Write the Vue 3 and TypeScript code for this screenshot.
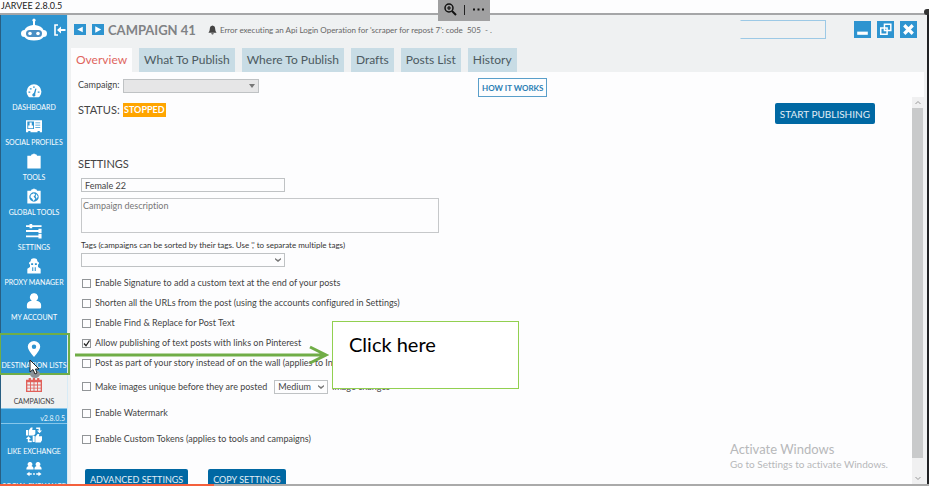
<script setup lang="ts">
import { ref } from 'vue'

interface NavItem { label: string; icon: string }
interface Option { label: string; checked: boolean; kind: 'tight' | 'select' | 'loose' }

const mainNav: NavItem[] = [
  { label: 'DASHBOARD', icon: 'gauge' },
  { label: 'SOCIAL PROFILES', icon: 'card' },
  { label: 'TOOLS', icon: 'clip' },
  { label: 'GLOBAL TOOLS', icon: 'globe' },
  { label: 'SETTINGS', icon: 'sliders' },
  { label: 'PROXY MANAGER', icon: 'spy' },
  { label: 'MY ACCOUNT', icon: 'user' },
]
const extraNav: NavItem[] = [
  { label: 'LIKE EXCHANGE', icon: 'likes' },
  { label: 'SOCIAL EXCHANGE', icon: 'people' },
]
const icons: Record<string, string> = {
  gauge: 'M2.500 15A8.300 8.300 0 1 1 15.500 15Q15 16 14 16H4Q3 16 2.500 15ZM7.500 12.500a1.700 1.700 0 1 0 2.800.200L11.800 6.500L10.500 6.200L9 11ZM2.800 9.500h2v1.600H2.800ZM4.300 5.800h2v1.600h-2ZM8 3.800h1.800v1.600H8ZM13.200 9.500h2v1.600h-2Z',
  card: 'M0 2.500H18V16H15.500V14.500H13V16H5V14.500H2.500V16H0ZM1.500 4V12.500H9V4.000ZM4 5h2.500v3.500H8v3H2.500V8.500H4ZM10.500 5V6H16V5ZM10.500 7.500V8.500H16V7.500ZM10.500 10V11H16V10Z',
  clip: 'M1.500 3H5.500L6.500 1.500H8L9 .2L10 1.500H11.500L12.500 3H16.500V17.500H1.500Z',
  globe: 'M1.500 3H5.500L6.500 1.500H8L9 .2L10 1.500H11.500L12.500 3H16.500V17.500H1.500ZM9 4.800A5.300 5.300 0 1 0 9 15.400A5.300 5.300 0 1 0 9 4.800ZM5.500 7.500L9 6.000L10.500 7.500L8.500 9.500L10.500 12L8.500 14.500L7 12L5 10.500ZM11.500 6.800L13.300 9.500L12 12L10.800 9.500Z',
  sliders: 'M0 2.500H4V1H7V2.500H17.500V4.500H7V6H4V4.500H0ZM0 8H14V6.500H17.500V11.500H14V10H0ZM0 14H14V12.500H17.500V17.500H14V16H0Z',
  spy: 'M6 1Q9 -.5 12 1L13 4L14.500 5V7L13.500 7V10L16.500 12V17.500H1.500V12L4.500 10V7L3.500 7V5L5 4ZM5.800 6V8H8V6ZM10 6V8H12.200V6ZM7 10.500V14.500H8.200V10.500ZM9.800 10.500V14.500H11V10.500Z',
  user: 'M9 .3A4 4.500 0 0 1 11.500 8.700Q17 9.500 17 13.500V16Q17 17.500 15.500 17.500H2.500Q1 17.500 1 16V13.500Q1 9.500 6.500 8.700A4 4.500 0 0 1 9 .3Z',
  pin: 'M9 0A7 6.500 0 0 1 16 6.500Q16 10 9 18Q2 10 2 6.500A7 6.500 0 0 1 9 0ZM9 4A2.500 2.500 0 1 0 9 9A2.500 2.500 0 1 0 9 4Z',
  calendar: 'M0 3H3V1H5.500V3H7.700V1H10.200V3H12.500V1H15V3H18V17H0ZM1.500 6V8.500H4.500V6ZM5.500 6V8.500H8.500V6ZM9.500 6V8.500H12.500V6ZM13.500 6V8.500H16.500V6ZM1.500 9.500V12H4.500V9.500ZM5.500 9.500V12H8.500V9.500ZM9.500 9.500V12H12.500V9.500ZM13.500 9.500V12H16.500V9.500ZM1.500 13V15.500H4.500V13ZM5.500 13V15.500H8.500V13ZM9.500 13V15.500H12.500V13ZM13.500 13V15.500H16.500V13Z',
  likes: 'M0 3.500H2.300V9.500H0ZM3 4L5.500 .5H7.500L7 3.500H10.500V7.500L9 9.500H3ZM7.500 10H9.800V17H7.500ZM10.500 11L13 8H15L14.500 10.500H18V15L16.500 17.500H10.500ZM11.500 .5H16V4H18L15.200 7L12.300 4H14.200V2.200H11.500ZM0 13.500L2.800 10.500L5.500 13.500H3.800V15.500H6.500V17.200H2V13.500Z',
  people: 'M4.500 0A2.500 2.500 0 0 1 6.200 4.500Q9 5.200 8.500 8.500H.5Q0 5.200 2.800 4.500A2.500 2.500 0 0 1 4.500 0ZM13.500 0A2.500 2.500 0 0 1 15.200 4.500Q18 5.200 17.500 8.500H9.500Q9 5.200 11.800 4.500A2.500 2.500 0 0 1 13.500 0ZM.5 13.500L4 11V12.700H6.500V14.300H4V16ZM17.500 13.500L14 11V12.700H11.500V14.300H14V16ZM8 12.700h2v1.600H8Z',
}

const tabs = ['Overview', 'What To Publish', 'Where To Publish', 'Drafts', 'Posts List', 'History']
const activeTab = ref('Overview')
const campaignName = ref('Female 22')
const description = ref('')
const strength = ref('Medium')
const options = ref<Option[]>([
  { label: 'Enable Signature to add a custom text at the end of your posts', checked: false, kind: 'tight' },
  { label: 'Shorten all the URLs from the post (using the accounts configured in Settings)', checked: false, kind: 'tight' },
  { label: 'Enable Find & Replace for Post Text', checked: false, kind: 'tight' },
  { label: 'Allow publishing of text posts with links on Pinterest', checked: true, kind: 'tight' },
  { label: 'Post as part of your story instead of on the wall (applies to Instagram)', checked: false, kind: 'tight' },
  { label: 'Make images unique before they are posted', checked: false, kind: 'select' },
  { label: 'Enable Watermark', checked: false, kind: 'loose' },
  { label: 'Enable Custom Tokens (applies to tools and campaigns)', checked: false, kind: 'loose' },
])
</script>

<template>
  <div class="screen">
    <div class="titlebar">JARVEE 2.8.0.5</div>
    <div class="window">
      <aside class="sidebar">
        <div class="brand">
          <svg class="robot" viewBox="0 0 26 24" aria-hidden="true">
            <path fill="#fff" d="M12 7V3.500a1.600 1.600 0 1 1 2 0V7Q21 8 22.500 12Q26 12 26 15.500T22.500 19Q20 22.500 13 22.500T3.500 19Q0 19 0 15.500T3.500 12Q5 8 12 7Z" />
            <rect x="5" y="12" width="16" height="7" rx="3.500" fill="#4a8fc4" />
            <circle cx="9" cy="15.500" r="1.800" fill="#fff" /><circle cx="17" cy="15.500" r="1.800" fill="#fff" />
          </svg>
          <svg class="logout" viewBox="0 0 12 12" aria-hidden="true">
            <path fill="none" stroke="#fff" stroke-width="1.600" d="M4 1H1V11H4" />
            <path fill="#fff" d="M3 6L7 2.500V5H11.500V7H7V9.500Z" />
          </svg>
        </div>
        <nav class="nav">
          <a v-for="n in mainNav" :key="n.label" href="#" class="item">
            <svg viewBox="0 0 18 18" aria-hidden="true"><path fill-rule="evenodd" :d="icons[n.icon]" /></svg>
            <span>{{ n.label }}</span>
          </a>
          <a href="#" class="item destination">
            <svg viewBox="0 0 18 18" aria-hidden="true"><path fill-rule="evenodd" :d="icons.pin" /></svg>
            <span>DESTINATION LISTS</span>
          </a>
          <a href="#" class="item current">
            <svg viewBox="0 0 18 18" aria-hidden="true"><path fill-rule="evenodd" :d="icons.calendar" /></svg>
            <span>CAMPAIGNS</span>
          </a>
          <div class="version">v2.8.0.5</div>
          <a v-for="n in extraNav" :key="n.label" href="#" class="item">
            <svg viewBox="0 0 18 18" aria-hidden="true"><path fill-rule="evenodd" :d="icons[n.icon]" /></svg>
            <span>{{ n.label }}</span>
          </a>
        </nav>
      </aside>

      <main class="main">
        <header class="toolbar">
          <button class="step" aria-label="Previous campaign"><svg viewBox="0 0 12 12"><path fill="#fff" d="M3 6L9 3V9Z" /></svg></button>
          <button class="step" aria-label="Next campaign"><svg viewBox="0 0 12 12"><path fill="#fff" d="M9.500 6L3 2.500V9.500Z" /></svg></button>
          <h1>CAMPAIGN 41</h1>
          <svg class="bell" viewBox="0 0 10 10" aria-hidden="true"><path fill="#444" d="M5 0Q8 .5 8 4Q8 6.500 9.500 8H.5Q2 6.500 2 4Q2 .5 5 0ZM3.500 8.500H6.500Q6 10 5 10T3.500 8.500Z" /></svg>
          <p class="notice">Error executing an Api Login Operation for 'scraper for repost 7': code&nbsp; 505&nbsp; - .</p>
          <input class="search" type="text" aria-label="Search" />
          <div class="controls">
            <button aria-label="Minimize"><svg viewBox="0 0 16 16"><path fill="#fff" d="M3 10H13V13H3Z" /></svg></button>
            <button aria-label="Restore"><svg viewBox="0 0 16 16"><path fill="none" stroke="#fff" stroke-width="1.400" d="M7 3H13V9H7ZM3.500 6.500H9.500V12.500H3.500Z" /></svg></button>
            <button aria-label="Close"><svg viewBox="0 0 16 16"><path fill="none" stroke="#fff" stroke-width="3" d="M4 4L12 12M12 4L4 12" /></svg></button>
          </div>
        </header>

        <div class="tabs" role="tablist">
          <button v-for="t in tabs" :key="t" role="tab" :aria-selected="t === activeTab" :class="['tab', { active: t === activeTab }]" @click="activeTab = t">{{ t }}</button>
        </div>

        <div class="panel">
          <form class="content" @submit.prevent>
            <div class="row">
              <label class="caption" for="campaign">Campaign:</label>
              <span class="picker campaign"><select id="campaign"><option></option></select><svg viewBox="0 0 6 6"><path d="M0 1H6L3 5Z" /></svg></span>
              <button type="button" class="how">HOW IT WORKS</button>
            </div>
            <div class="row status">
              <span class="heading">STATUS:</span>
              <strong class="badge">STOPPED</strong>
              <button type="button" class="primary start">START PUBLISHING</button>
            </div>
            <h2 class="heading">SETTINGS</h2>
            <div class="fields">
              <input v-model="campaignName" class="name" type="text" aria-label="Campaign name" />
              <textarea v-model="description" placeholder="Campaign description" aria-label="Campaign description"></textarea>
              <label class="hint" for="tags">Tags (campaigns can be sorted by their tags. Use ',' to separate multiple tags)</label>
              <span class="picker tags"><select id="tags"><option></option></select><svg viewBox="0 0 6 6"><path d="M0 1L3 3L6 1V2.500L3 5L0 2.500Z" /></svg></span>
            </div>
            <div class="options">
              <div v-for="(o, i) in options" :key="o.label" :class="['option', o.kind]">
                <input :id="'opt' + i" v-model="o.checked" type="checkbox" />
                <svg v-if="o.checked" class="tick" viewBox="0 0 9 9" aria-hidden="true"><path d="M2 4.500L4 6.800L7.500 1.500" /></svg>
                <label :for="'opt' + i">{{ o.label }}</label>
                <template v-if="o.kind === 'select'">
                  <span class="picker strength"><select id="strength" v-model="strength"><option>Medium</option></select><svg viewBox="0 0 6 6"><path d="M0 1L3 3L6 1V2.500L3 5L0 2.500Z" /></svg></span>
                  <label for="strength">image changes</label>
                </template>
              </div>
            </div>
            <div class="actions">
              <button type="button" class="primary">ADVANCED SETTINGS</button>
              <button type="button" class="primary">COPY SETTINGS</button>
            </div>
          </form>
          <div class="scrollbar" aria-hidden="true">
            <svg viewBox="0 0 12 11"><path d="M3.500 7L6 4.500L8.500 7" /></svg>
            <span class="thumb"></span>
            <svg class="down" viewBox="0 0 12 11"><path d="M3.500 4L6 6.500L8.500 4" /></svg>
          </div>
        </div>
      </main>
      <div class="edge"></div>
    </div>
    <div class="progress"><span></span></div>

    <div class="viewer">
      <svg viewBox="0 0 52 21" aria-hidden="true">
        <circle cx="11" cy="8" r="4" fill="none" stroke="#111" stroke-width="1.500" />
        <path fill="none" stroke="#111" stroke-width="1.200" d="M9 8H13M11 6V10" />
        <path stroke="#111" stroke-width="2" d="M14 11L18 15" />
        <path stroke="#222" stroke-width="1" d="M26.500 5V15" />
        <path fill="#111" d="M35 8.500h2v2h-2zM39.500 8.500h2v2h-2zM44 8.500h2v2h-2z" />
      </svg>
    </div>
    <div class="corner"></div>
    <div class="watermark"><b>Activate Windows</b><span>Go to Settings to activate Windows.</span></div>
    <div class="highlight"></div>
    <svg class="pointer" viewBox="0 0 12 20" aria-hidden="true">
      <ellipse cx="6" cy="15" rx="5" ry="4" fill="#8b9299" />
      <path fill="#fff" stroke="#222" d="M1 1V13L4 10.500L6 15L8 14L6.500 10H10Z" />
    </svg>
    <svg class="arrow" viewBox="0 0 256 20" aria-hidden="true"><path fill="none" stroke="#70ad47" stroke-width="3" d="M0 10H250M235 2L251 10L235 18" /></svg>
    <div class="callout">Click here</div>
  </div>
</template>

<style>
body { overflow: hidden; }
</style>

<style scoped>
* { box-sizing: border-box; }
.screen {
  position: relative; display: flex; flex-direction: column; height: 100vh; overflow: hidden;
  background: #fdfdfe; color: #444; font: 9px/12px Lato, "Open Sans", sans-serif;
  font-variant-ligatures: none;
}
button, input, select, textarea { font: inherit; color: inherit; margin: 0; border-radius: 0; }
button { border: 0; padding: 0; white-space: nowrap; }
svg { display: block; }
.titlebar { flex: none; height: 15px; border-bottom: 2px solid #a5a6a8; padding-left: 1px; line-height: 12px; color: #222; }
.window { flex: 1; min-height: 0; display: flex; }

.sidebar { flex: none; width: 68px; border-left: 1px solid #285f83; border-right: 1px solid #d7ebf6; background: #2e94d0; overflow: hidden; }
.brand { display: flex; align-items: center; gap: 7px; height: 67px; padding: 2px 0 39px 20px; }
.robot { width: 26px; height: 24px; }
.logout { width: 12px; height: 12px; }
.item { display: flex; flex-direction: column; align-items: center; height: 35px; color: #fff; text-decoration: none; font-size: 7px; line-height: 10px; white-space: nowrap; gap: 2px; }
.item svg { width: 18px; height: 18px; fill: #fff; padding: 1px; }
.item.destination { height: 48px; padding-top: 13px; }
.item.current { height: 33px; padding-top: 1px; background: #eff1f2; color: #444; }
.item.current svg { fill: #e0605a; }
.version { height: 16px; margin-bottom: 2px; padding-right: 2px; border-top: 1px solid #86c6ea; border-bottom: 1px solid #86c6ea; text-align: right; color: #e6f4fc; font-size: 7px; line-height: 18px; }

.main { flex: 1; min-width: 0; display: flex; flex-direction: column; background: #eff1f2; }
.toolbar { display: flex; align-items: center; height: 33px; padding: 0 7px 4px 6px; }
.step { width: 12px; height: 11px; background: #2e94d0; margin-right: 6px; }
.step + h1 { margin-left: -2px; }
.step svg { width: 12px; height: 11px; }
h1 { margin: 0 12px 0 0; font-size: 13px; line-height: 20px; font-weight: 700; color: #808285; white-space: nowrap; }
.bell { width: 9px; height: 10px; margin-right: 3px; }
.notice { flex: 1; margin: 0; font-size: 8px; color: #666; white-space: nowrap; }
.search { width: 86px; height: 19px; border: 1px solid #9cc9e6; border-left-color: transparent; background: transparent; }
.controls { display: flex; gap: 6px; margin-left: 28px; }
.controls button { width: 17px; height: 17px; background: #2e94d0; }
.tabs { display: flex; gap: 7px; padding-left: 3px; height: 24px; }
.tab { padding: 0 5px; background: #c8dce5; font-size: 12px; line-height: 24px; color: #4c5a61; }
.tab.active { background: #fdfdfe; color: #e0655f; }

.panel { flex: 1; min-height: 0; display: flex; margin-left: 3px; background: #fdfdfe; }
.content { flex: 1; min-width: 0; overflow: hidden; padding: 5px 37px 0 7px; }
.row { display: flex; align-items: flex-start; height: 20px; }
.row > .caption, .row > .campaign { margin-top: 2px; }
.caption { width: 45px; }
.picker { position: relative; display: flex; }
.picker select { appearance: none; width: 100%; height: 14px; padding: 0 3px; border: 1px solid #bfc2c4; background: #fdfdfe; line-height: 12px; }
.picker svg { position: absolute; right: 4px; top: 4px; width: 6px; height: 6px; fill: #777; pointer-events: none; }
.picker.campaign { width: 136px; }
.campaign select { background: #e6e6e7; }
.how { margin: 1px 0 0 219px; height: 19px; padding: 0 3px; border: 1px solid #5a9fca; background: #fdfdfe; color: #2a7eb4; font-size: 8px; font-weight: 700; }
.row.status { height: 32px; padding-top: 6px; }
.heading { margin: 0; font-size: 11px; line-height: 14px; font-weight: 400; color: #444; }
.status .heading { width: 45px; }
.badge { background: #ffa500; color: #fff; padding: 0 1px; line-height: 14px; }
.primary { background: #0068a3; color: #e0eef6; height: 21px; border-radius: 2px; padding: 0 5px; }
.start { margin-left: auto; font-size: 10px; }
h2.heading { margin-top: 28px; }
.fields { display: flex; flex-direction: column; align-items: flex-start; padding: 7px 0 0 3px; }
.name { width: 204px; height: 14px; padding: 0 3px; border: 1px solid #bfc2c4; background: #fdfdfe; }
textarea { width: 358px; height: 35px; margin: 6px 0; padding: 1px; border: 1px solid #c6c8ca; background: #fdfdfe; resize: none; }
textarea::placeholder { color: #777; opacity: 1; }
.hint { font-size: 8px; color: #333; }
.tags { width: 204px; margin-top: 2px; }
.options { padding: 6px 0 0 4px; }
.option { position: relative; display: flex; align-items: center; gap: 4px; height: 20px; white-space: nowrap; }
.option.select { height: 27px; }
.option.loose { height: 26px; }
.option input { appearance: none; width: 9px; height: 9px; border: 1px solid #929598; background: #fdfdfe; }
.tick { position: absolute; left: 0; width: 9px; height: 9px; fill: none; stroke: #222; stroke-width: 1.300; pointer-events: none; }
.strength { width: 54px; margin-left: 3px; }
.actions { display: flex; gap: 20px; padding: 17px 0 0 7px; }

.scrollbar { flex: none; display: flex; flex-direction: column; width: 12px; margin: 25px 0 0; background: #f0f0f1; }
.scrollbar svg { height: 11px; fill: none; stroke: #999; }
.thumb { flex: 1; margin-right: 1px; background: #c9cacb; }
.scrollbar .down { margin-top: 15px; }
.edge { flex: none; width: 5px; border-right: 2px solid #202124; background: #f0f1f2; }
.progress { flex: none; height: 2px; background: #aaa; }
.progress span { display: block; width: 23%; height: 2px; background: #f4603c; }

.viewer { position: absolute; left: 438px; top: 0; width: 52px; height: 21px; background: #a0a0a1; }
.corner { position: absolute; right: 0; top: 9px; width: 5px; height: 6px; border-radius: 3px 0 0 3px; background: #333; }
.watermark { position: absolute; right: 38px; bottom: 14px; display: flex; flex-direction: column; width: 161px; color: #b7b8ba; font-size: 10px; line-height: 15px; }
.watermark b { font-size: 13px; line-height: 16px; font-weight: 400; }
.highlight { position: absolute; left: -1px; top: 333px; width: 71px; height: 42px; border: 2px solid #70ad47; }
.pointer { position: absolute; left: 29px; top: 359px; width: 12px; height: 20px; }
.arrow { position: absolute; left: 75px; top: 345px; width: 256px; height: 20px; }
.callout { position: absolute; left: 332px; top: 321px; width: 187px; height: 68px; padding: 9px 16px; border: 1px solid #92d050; background: #fff; color: #000; font-size: 20px; line-height: 26px; }
</style>
